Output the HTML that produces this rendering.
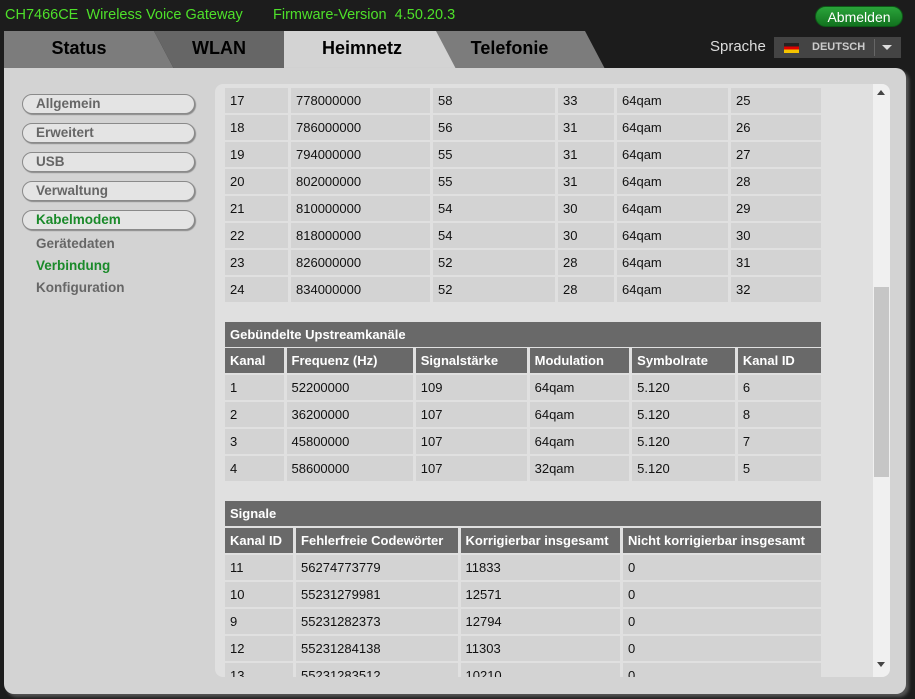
<!DOCTYPE html>
<html><head><meta charset="utf-8"><style>
*{margin:0;padding:0;box-sizing:border-box}
body{width:915px;height:699px;background:#1c1c1c;font-family:"Liberation Sans",Arial,sans-serif;position:relative;overflow:hidden}
.top{position:absolute;top:7px;color:#4ee02a;font-size:14.5px}
.btn{position:absolute;left:815px;top:6px;width:88px;height:21px;border-radius:11px;background:linear-gradient(#2aa43a,#12721f);color:#fff;font-size:14px;text-align:center;line-height:21px;border:1px solid #0c5a16}
.tab{position:absolute;top:31px;height:38px;font-weight:bold;font-size:18px;color:#000;text-align:center;line-height:34px}
.panel{position:absolute;left:4px;top:68px;width:902px;height:626px;background:#d3d3d3;border-radius:0 10px 10px 10px;box-shadow:3px 3px 3px #555}
.nav{position:absolute;left:22px;width:173px;height:20px;border:1px solid #8a8a8a;border-radius:10px;background:#e4e4e4;box-shadow:1px 1px 1px #888;font-weight:bold;font-size:13.5px;color:#666;padding-left:13px;line-height:18px}
.sub{position:absolute;left:36px;font-weight:bold;font-size:13.5px;color:#666}
.content{position:absolute;left:215px;top:84px;width:675px;height:593px;background:#e0e0e0;border-radius:8px;overflow:hidden}
.sb{position:absolute;left:658px;top:0;width:17px;height:593px;background:#f0f0f0}
.thumb{position:absolute;left:659px;top:203px;width:15px;height:190px;background:#c6c6c6}
table{position:absolute;border-collapse:separate;border-spacing:3px 2px;table-layout:fixed;font-size:13px;color:#111}
td{background:#d3d3d3;height:25px;padding-left:5px;white-space:nowrap;overflow:hidden}
th{background:#696969;color:#fff;font-weight:bold;text-align:left;height:25px;padding-left:5px;font-size:13px;white-space:nowrap}
.title{position:absolute;left:10px;width:596px;height:25px;background:#696969;color:#fff;font-weight:bold;font-size:13px;line-height:25px;padding-left:5px}
</style></head><body>
<div class="top" style="left:5px">CH7466CE&nbsp; Wireless Voice Gateway</div>
<div class="top" style="left:273px">Firmware-Version&nbsp; 4.50.20.3</div>
<div class="btn">Abmelden</div>
<div style="position:absolute;left:710px;top:38px;color:#ddd;font-size:15px">Sprache</div>
<div style="position:absolute;left:774px;top:37px;width:127px;height:21px;background:#444;color:#ccc;font-size:11px;font-weight:bold;line-height:21px">
<span style="position:absolute;left:10px;top:6px;width:15px;height:10px;background:linear-gradient(#222 33%,#d00 33% 66%,#f5c400 66%)"></span>
<span style="position:absolute;left:38px">DEUTSCH</span>
<span style="position:absolute;left:100px;top:2px;width:1px;height:17px;background:#666"></span>
<span style="position:absolute;left:108px;top:8px;border:5px solid transparent;border-top:5px solid #ddd"></span></div>
<div class="tab" style="left:4px;width:170px;background:#7c7c7c;clip-path:polygon(0 0,150px 0,170px 100%,0 100%)"><span style="position:relative;left:-10px">Status</span></div>
<div class="tab" style="left:154px;width:150px;background:#666;clip-path:polygon(0 0,130px 0,150px 100%,20px 100%)"><span style="position:relative;left:-10px">WLAN</span></div>
<div class="tab" style="left:430px;width:175px;background:#7c7c7c;clip-path:polygon(0 0,155px 0,175px 100%,20px 100%)"><span style="position:relative;left:-8px">Telefonie</span></div>
<div class="tab" style="left:284px;width:172px;background:#d3d3d3;clip-path:polygon(0 0,152px 0,172px 100%,0 100%)"><span style="position:relative;left:-8px">Heimnetz</span></div>
<div class="panel"></div>
<div class="nav" style="top:94px">Allgemein</div>
<div class="nav" style="top:123px">Erweitert</div>
<div class="nav" style="top:152px">USB</div>
<div class="nav" style="top:181px">Verwaltung</div>
<div class="nav" style="top:210px;color:#1a8a2a">Kabelmodem</div>
<div class="sub" style="top:236px">Gerätedaten</div>
<div class="sub" style="top:258px;color:#1a8a2a">Verbindung</div>
<div class="sub" style="top:280px">Konfiguration</div>
<div class="content">
<table style="left:7px;top:2px;width:602px"><colgroup><col style="width:63px"><col style="width:139px"><col style="width:122px"><col style="width:56px"><col style="width:111px"><col style="width:90px"></colgroup>
<tr><td>17</td><td>778000000</td><td>58</td><td>33</td><td>64qam</td><td>25</td></tr>
<tr><td>18</td><td>786000000</td><td>56</td><td>31</td><td>64qam</td><td>26</td></tr>
<tr><td>19</td><td>794000000</td><td>55</td><td>31</td><td>64qam</td><td>27</td></tr>
<tr><td>20</td><td>802000000</td><td>55</td><td>31</td><td>64qam</td><td>28</td></tr>
<tr><td>21</td><td>810000000</td><td>54</td><td>30</td><td>64qam</td><td>29</td></tr>
<tr><td>22</td><td>818000000</td><td>54</td><td>30</td><td>64qam</td><td>30</td></tr>
<tr><td>23</td><td>826000000</td><td>52</td><td>28</td><td>64qam</td><td>31</td></tr>
<tr><td>24</td><td>834000000</td><td>52</td><td>28</td><td>64qam</td><td>32</td></tr>
</table>
<div class="title" style="top:238px">Gebündelte Upstreamkanäle</div>
<table style="left:7px;top:262px;width:602px"><colgroup><col style="width:57px"><col style="width:123px"><col style="width:108px"><col style="width:97px"><col style="width:100px"><col style="width:81px"></colgroup>
<tr><th>Kanal</th><th>Frequenz (Hz)</th><th>Signalstärke</th><th>Modulation</th><th>Symbolrate</th><th>Kanal ID</th></tr>
<tr><td>1</td><td>52200000</td><td>109</td><td>64qam</td><td>5.120</td><td>6</td></tr>
<tr><td>2</td><td>36200000</td><td>107</td><td>64qam</td><td>5.120</td><td>8</td></tr>
<tr><td>3</td><td>45800000</td><td>107</td><td>64qam</td><td>5.120</td><td>7</td></tr>
<tr><td>4</td><td>58600000</td><td>107</td><td>32qam</td><td>5.120</td><td>5</td></tr>
</table>
<div class="title" style="top:417px">Signale</div>
<table style="left:7px;top:442px;width:602px"><colgroup><col style="width:67px"><col style="width:159px"><col style="width:157px"><col style="width:195px"></colgroup>
<tr><th>Kanal ID</th><th>Fehlerfreie Codewörter</th><th>Korrigierbar insgesamt</th><th>Nicht korrigierbar insgesamt</th></tr>
<tr><td>11</td><td>56274773779</td><td>11833</td><td>0</td></tr>
<tr><td>10</td><td>55231279981</td><td>12571</td><td>0</td></tr>
<tr><td>9</td><td>55231282373</td><td>12794</td><td>0</td></tr>
<tr><td>12</td><td>55231284138</td><td>11303</td><td>0</td></tr>
<tr><td>13</td><td>55231283512</td><td>10210</td><td>0</td></tr>
</table>
<div class="sb"></div><div class="thumb"></div>
<div style="position:absolute;left:662px;top:6px;border:4px solid transparent;border-bottom:5px solid #444;border-top:0"></div>
<div style="position:absolute;left:662px;top:578px;border:4px solid transparent;border-top:5px solid #444;border-bottom:0"></div>
</div>
</body></html>
